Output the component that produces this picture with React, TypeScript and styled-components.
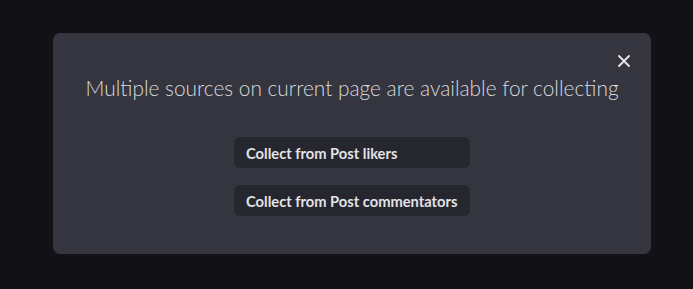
import React from "react";
import styled, { createGlobalStyle } from "styled-components";

const Global = createGlobalStyle`
  html, body { margin: 0; padding: 0; background: #111116; }
  body { width: 693px; height: 289px; overflow: hidden; font-family: Lato, "Open Sans", sans-serif; -webkit-font-smoothing: antialiased; }
`;

const Page = styled.div`
  width: 693px;
  height: 289px;
  box-sizing: border-box;
  padding: 33px 42px 35px 53px;
  background: #111116;
`;

const Modal = styled.div`
  position: relative;
  height: 221px;
  box-sizing: border-box;
  background: #34353f;
  border-radius: 7px;
  display: flex;
  flex-direction: column;
  align-items: center;
  padding-top: 42px;
`;

const Close = styled.button`
  position: absolute;
  top: 20px;
  right: 19px;
  width: 16px;
  height: 16px;
  padding: 0;
  border: 0;
  background: transparent;
  display: flex;
  align-items: center;
  justify-content: center;
  cursor: pointer;
`;

const Title = styled.h2`
  margin: 0;
  font-family: Lato, sans-serif;
  font-weight: 300;
  font-size: 20.85px;
  line-height: 26px;
  color: #d9d9dd;
`;

const Options = styled.div`
  margin-top: 36px;
  display: flex;
  flex-direction: column;
  gap: 17px;
`;

const Option = styled.button`
  width: 236px;
  height: 31px;
  box-sizing: border-box;
  padding: 0 12px;
  border: 0;
  border-radius: 6px;
  background: #26272e;
  color: #e2e2e6;
  font-family: Lato, sans-serif;
  font-weight: 700;
  font-size: 14.7px;
  text-align: left;
  cursor: pointer;
`;

export default function App() {
  return (
    <>
      <Global />
      <Page>
        <Modal>
          <Close aria-label="Close">
            <svg width="12" height="12" viewBox="0 0 12 12">
              <path d="M1 1L11 11M11 1L1 11" stroke="#e6e6ea" strokeWidth="1.8" strokeLinecap="round" />
            </svg>
          </Close>
          <Title>Multiple sources on current page are available for collecting</Title>
          <Options>
            <Option>Collect from Post likers</Option>
            <Option>Collect from Post commentators</Option>
          </Options>
        </Modal>
      </Page>
    </>
  );
}
